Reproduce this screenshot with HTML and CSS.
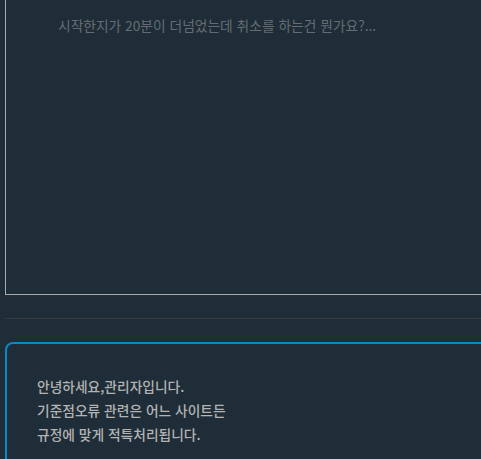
FILE: index.html
```html
<!DOCTYPE html>
<html lang="ko">
<head>
  <meta charset="UTF-8" />
  <meta name="viewport" content="width=device-width, initial-scale=1.0"/>
  <title>문의 답변</title>
  <link rel="stylesheet" href="styles.css">
</head>
<body>
  <div class="qna-container">
    <!-- 문의 내용 -->
    <textarea class="qna-question" placeholder="시작한지가 20분이 더넘었는데 취소를 하는건 뭔가요?..." readonly></textarea>

    <hr class="qna-divider" />

    <!-- 관리자 답변 -->
    <div class="qna-answer">
      <p>안녕하세요,관리자입니다.<br>
      기준점오류 관련은 어느 사이트든<br>
      규정에 맞게 적특처리됩니다.</p>
    </div>
  </div>
</body>
</html>
```

FILE: styles.css
```css
body {
  margin: 0;
  padding: 0;
  font-family: "Noto Sans CJK KR", "Noto Sans", sans-serif;
  background-color: #1e2d38;
  overflow: hidden;
}

.qna-container {
  padding-left: 5px;
  width: 540px;
}

.qna-question {
  display: block;
  box-sizing: border-box;
  width: 100%;
  height: 305px;
  margin: -10px 0 0;
  padding: 24px 20px 0 52px;
  background: transparent;
  border: 1px solid #a9a9a9;
  font-family: inherit;
  font-size: 13.75px;
  line-height: 20px;
  color: #b5b5b5;
  resize: none;
  outline: none;
}

.qna-question::placeholder {
  color: #666d72;
}

.qna-divider {
  margin: 23px 0;
  border: none;
  border-top: 1px solid #363b3e;
}

.qna-answer {
  border: 2px solid #0a88c8;
  border-radius: 8px;
  padding: 30px 30px 40px;
  height: 200px;
}

.qna-answer p {
  margin: 0;
  font-size: 13.75px;
  font-weight: 500;
  line-height: 24px;
  color: #b3b3b3;
}
```
